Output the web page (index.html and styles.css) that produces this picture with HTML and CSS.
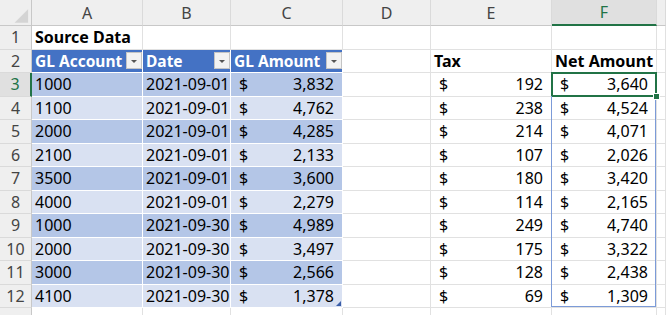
FILE: index.html
```html
<!DOCTYPE html>
<html lang="en">
<head>
    <meta charset="UTF-8">
    <title>Source Data</title>
    <link rel="stylesheet" href="styles.css">
</head>
<body>
<div class="sheet">
    <!-- column headers -->
    <div class="corner">
        <svg width="32" height="26" viewBox="0 0 32 26"><polygon points="29,9 29,23 15,23" fill="#d4d4d4"/></svg>
    </div>
    <div class="colhead">A</div>
    <div class="colhead">B</div>
    <div class="colhead">C</div>
    <div class="colhead">D</div>
    <div class="colhead">E</div>
    <div class="colhead sel">F</div>
    <div class="colhead"></div>

    <!-- row 1 -->
    <div class="rowhead">1</div>
    <div class="cell bold">Source Data</div>
    <div class="cell"></div>
    <div class="cell"></div>
    <div class="cell"></div>
    <div class="cell"></div>
    <div class="cell"></div>
    <div class="cell"></div>

    <!-- row 2 -->
    <div class="rowhead">2</div>
    <div class="cell th">GL Account<span class="dd"></span></div>
    <div class="cell th">Date<span class="dd"></span></div>
    <div class="cell th">GL Amount<span class="dd"></span></div>
    <div class="cell"></div>
    <div class="cell bold">Tax</div>
    <div class="cell bold">Net Amount</div>
    <div class="cell"></div>

    <!-- row 3 -->
    <div class="rowhead sel">3</div>
    <div class="cell dark">1000</div>
    <div class="cell dark">2021-09-01</div>
    <div class="cell dark acct"><span>$</span><span>3,832</span></div>
    <div class="cell"></div>
    <div class="cell acct"><span>$</span><span>192</span></div>
    <div class="cell acct rng active"><span>$</span><span>3,640</span><i class="handle"></i></div>
    <div class="cell"></div>

    <!-- row 4 -->
    <div class="rowhead">4</div>
    <div class="cell light">1100</div>
    <div class="cell light">2021-09-01</div>
    <div class="cell light acct"><span>$</span><span>4,762</span></div>
    <div class="cell"></div>
    <div class="cell acct"><span>$</span><span>238</span></div>
    <div class="cell acct rng"><span>$</span><span>4,524</span></div>
    <div class="cell"></div>

    <!-- row 5 -->
    <div class="rowhead">5</div>
    <div class="cell dark">2000</div>
    <div class="cell dark">2021-09-01</div>
    <div class="cell dark acct"><span>$</span><span>4,285</span></div>
    <div class="cell"></div>
    <div class="cell acct"><span>$</span><span>214</span></div>
    <div class="cell acct rng"><span>$</span><span>4,071</span></div>
    <div class="cell"></div>

    <!-- row 6 -->
    <div class="rowhead">6</div>
    <div class="cell light">2100</div>
    <div class="cell light">2021-09-01</div>
    <div class="cell light acct"><span>$</span><span>2,133</span></div>
    <div class="cell"></div>
    <div class="cell acct"><span>$</span><span>107</span></div>
    <div class="cell acct rng"><span>$</span><span>2,026</span></div>
    <div class="cell"></div>

    <!-- row 7 -->
    <div class="rowhead">7</div>
    <div class="cell dark">3500</div>
    <div class="cell dark">2021-09-01</div>
    <div class="cell dark acct"><span>$</span><span>3,600</span></div>
    <div class="cell"></div>
    <div class="cell acct"><span>$</span><span>180</span></div>
    <div class="cell acct rng"><span>$</span><span>3,420</span></div>
    <div class="cell"></div>

    <!-- row 8 -->
    <div class="rowhead">8</div>
    <div class="cell light">4000</div>
    <div class="cell light">2021-09-01</div>
    <div class="cell light acct"><span>$</span><span>2,279</span></div>
    <div class="cell"></div>
    <div class="cell acct"><span>$</span><span>114</span></div>
    <div class="cell acct rng"><span>$</span><span>2,165</span></div>
    <div class="cell"></div>

    <!-- row 9 -->
    <div class="rowhead">9</div>
    <div class="cell dark">1000</div>
    <div class="cell dark">2021-09-30</div>
    <div class="cell dark acct"><span>$</span><span>4,989</span></div>
    <div class="cell"></div>
    <div class="cell acct"><span>$</span><span>249</span></div>
    <div class="cell acct rng"><span>$</span><span>4,740</span></div>
    <div class="cell"></div>

    <!-- row 10 -->
    <div class="rowhead">10</div>
    <div class="cell light">2000</div>
    <div class="cell light">2021-09-30</div>
    <div class="cell light acct"><span>$</span><span>3,497</span></div>
    <div class="cell"></div>
    <div class="cell acct"><span>$</span><span>175</span></div>
    <div class="cell acct rng"><span>$</span><span>3,322</span></div>
    <div class="cell"></div>

    <!-- row 11 -->
    <div class="rowhead">11</div>
    <div class="cell dark">3000</div>
    <div class="cell dark">2021-09-30</div>
    <div class="cell dark acct"><span>$</span><span>2,566</span></div>
    <div class="cell"></div>
    <div class="cell acct"><span>$</span><span>128</span></div>
    <div class="cell acct rng"><span>$</span><span>2,438</span></div>
    <div class="cell"></div>

    <!-- row 12 -->
    <div class="rowhead">12</div>
    <div class="cell light">4100</div>
    <div class="cell light">2021-09-30</div>
    <div class="cell light acct table-end"><span>$</span><span>1,378</span></div>
    <div class="cell"></div>
    <div class="cell acct"><span>$</span><span>69</span></div>
    <div class="cell acct rng rng-end"><span>$</span><span>1,309</span></div>
    <div class="cell"></div>

    <!-- row 13, only its top edge is in view -->
    <div class="rowhead"></div>
    <div class="cell"></div>
    <div class="cell"></div>
    <div class="cell"></div>
    <div class="cell"></div>
    <div class="cell"></div>
    <div class="cell"></div>
    <div class="cell"></div>
</div>
</body>
</html>
```

FILE: styles.css
```css
body {
    margin: 0;
    background: #fff;
    overflow: hidden;
}

.sheet {
    display: grid;
    grid-template-columns: 32px 111px 88px 112px 88px 121px 105px 1fr;
    grid-template-rows: 26px repeat(13, 23.5px);
    width: 666px;
    height: 315px;
    overflow: hidden;
    font-family: "Noto Sans", sans-serif;
    font-size: 16px;
    color: #000;
}

.corner,
.colhead,
.rowhead {
    background: #efefef;
    color: #444;
    box-sizing: border-box;
    display: flex;
    align-items: center;
    justify-content: center;
}

.corner {
    border-right: 1px solid #c8c8c8;
    border-bottom: 1px solid #c8c8c8;
}

.colhead {
    border-right: 1px solid #dadada;
    border-bottom: 1px solid #c8c8c8;
}

.rowhead {
    border-right: 1px solid #c8c8c8;
    border-bottom: 1px solid #dadada;
}

.colhead.sel {
    background: #e0e0e0;
    color: #217346;
    border-bottom: 2px solid #217346;
}

.rowhead.sel {
    background: #e0e0e0;
    color: #217346;
    border-right: 2px solid #217346;
}

.cell {
    box-sizing: border-box;
    border-right: 1px solid #e1e1e1;
    border-bottom: 1px solid #e1e1e1;
    display: flex;
    align-items: center;
    padding: 0 3px 0 3px;
    white-space: nowrap;
}

.bold {
    font-weight: 700;
}

.th {
    background: #4472c4;
    color: #fff;
    font-weight: 700;
    font-size: 15.5px;
    border-color: #fff;
    justify-content: space-between;
    padding-right: 0;
}

.dd {
    box-sizing: border-box;
    width: 16px;
    height: 17px;
    background: #f2f2f2;
    border: 1px solid #c4c4c4;
    display: flex;
    align-items: center;
    justify-content: center;
}

.dd::before {
    content: "";
    border-left: 3px solid transparent;
    border-right: 3px solid transparent;
    border-top: 3px solid #555;
    margin-top: 1px;
}

.dark {
    background: #b4c6e7;
    border-color: #fff;
}

.light {
    background: #d9e1f2;
    border-color: #fff;
}

.acct {
    justify-content: space-between;
    padding: 0 8px 0 8px;
}

.table-end {
    position: relative;
}

.table-end::after {
    content: "";
    position: absolute;
    right: 1px;
    bottom: 1px;
    border-left: 5px solid transparent;
    border-bottom: 5px solid #3b5ea8;
}

/* selected range F3:F12 */
.rng {
    position: relative;
}

.rng::before {
    content: "";
    position: absolute;
    top: -1px;
    bottom: -1px;
    left: -1px;
    right: 0;
    border-left: 1px solid #7c9bd8;
    border-right: 1px solid #7c9bd8;
    pointer-events: none;
}

.rng-end::before {
    bottom: 0;
    border-bottom: 1px solid #7c9bd8;
}

.active::after {
    content: "";
    position: absolute;
    top: -1px;
    bottom: -1px;
    left: -1px;
    right: -1px;
    border: 2px solid #217346;
    pointer-events: none;
}

.handle {
    position: absolute;
    right: -4px;
    bottom: -4px;
    width: 5px;
    height: 5px;
    background: #217346;
    border: 1px solid #fff;
    z-index: 1;
}
```
